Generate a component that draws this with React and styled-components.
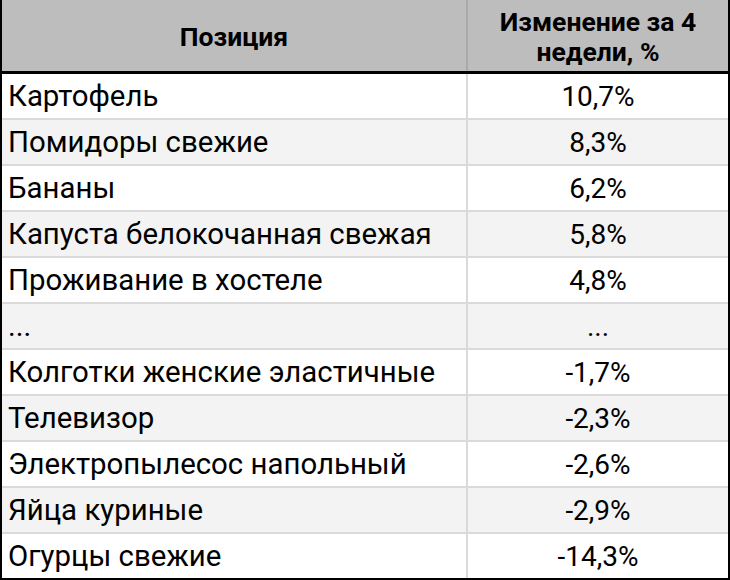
import React from "react";
import styled, { createGlobalStyle } from "styled-components";

const Global = createGlobalStyle`
  html, body { margin: 0; padding: 0; background: #fff; }
  body { font-family: Roboto, "Noto Sans", Arial, sans-serif; color: #000; }
`;

const Table = styled.div`
  width: 730px;
  height: 580px;
  box-sizing: border-box;
  border-left: 2px solid #000;
  border-right: 2px solid #000;
  border-bottom: 2px solid #000;
  display: flex;
  flex-direction: column;
`;

const HeaderRow = styled.div`
  display: grid;
  grid-template-columns: 464px 2px 1fr;
  height: 71px;
  background: #bdbdbd;
  border-bottom: 3px solid #000;
`;

const HeaderCell = styled.div`
  display: flex;
  align-items: center;
  justify-content: center;
  text-align: center;
  font-weight: 700;
  font-size: 26.5px;
  line-height: 30px;
  padding-top: 3px;
`;

const HeaderSep = styled.div`
  background: #a9a9a9;
`;

const Row = styled.div`
  display: grid;
  grid-template-columns: 464px 2px 1fr;
  height: 44px;
  background: ${(p) => (p.$alt ? "#f3f3f3" : "#fff")};
  border-bottom: 2px solid #dadada;
  &:last-child {
    border-bottom: none;
  }
`;

const Sep = styled.div`
  background: #dadada;
`;

const NameCell = styled.div`
  display: flex;
  align-items: center;
  padding-left: 6px;
  font-size: 29.4px;
  white-space: nowrap;
`;

const ValueCell = styled.div`
  display: flex;
  align-items: center;
  justify-content: center;
  font-size: 28px;
`;

const rows = [
  ["Картофель", "10,7%"],
  ["Помидоры свежие", "8,3%"],
  ["Бананы", "6,2%"],
  ["Капуста белокочанная свежая", "5,8%"],
  ["Проживание в хостеле", "4,8%"],
  ["...", "..."],
  ["Колготки женские эластичные", "-1,7%"],
  ["Телевизор", "-2,3%"],
  ["Электропылесос напольный", "-2,6%"],
  ["Яйца куриные", "-2,9%"],
  ["Огурцы свежие", "-14,3%"],
];

export default function App() {
  return (
    <>
      <Global />
      <Table>
        <HeaderRow>
          <HeaderCell>Позиция</HeaderCell>
          <HeaderSep />
          <HeaderCell>
            Изменение за 4
            <br />
            недели, %
          </HeaderCell>
        </HeaderRow>
        {rows.map(([name, value], i) => (
          <Row key={i} $alt={i % 2 === 1}>
            <NameCell>{name}</NameCell>
            <Sep />
            <ValueCell>{value}</ValueCell>
          </Row>
        ))}
      </Table>
    </>
  );
}
